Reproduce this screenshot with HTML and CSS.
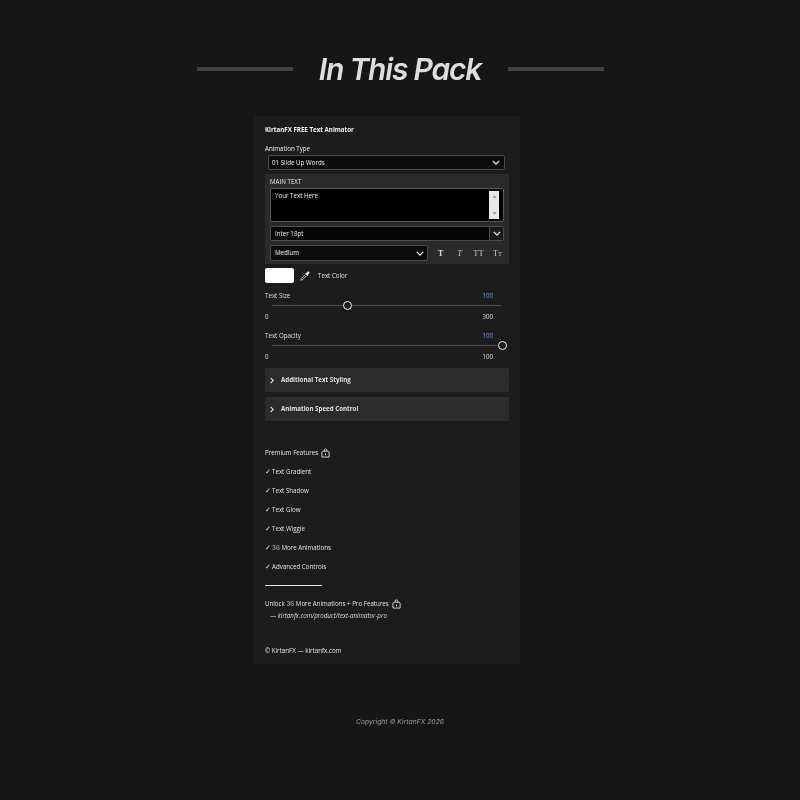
FILE: index.html
```html
<!DOCTYPE html>
<html lang="en">
<head>
<meta charset="utf-8">
<title>In This Pack</title>
<link rel="stylesheet" href="styles.css">
</head>
<body>
<main class="page">
  <header class="hero">
    <span class="hero-line"></span>
    <h1 class="hero-title">In This Pack</h1>
    <span class="hero-line"></span>
  </header>

  <section class="panel">
    <h2 class="panel-title">KirtanFX FREE Text Animator</h2>

    <div class="label label-type">Animation Type</div>
    <div class="select select-type">
      <span>01 Slide Up Words</span>
      <svg class="chev" viewBox="0 0 10 6"><path d="M1 1l4 4 4-4"/></svg>
    </div>

    <div class="group">
      <div class="group-label">MAIN TEXT</div>
      <div class="textarea">
        <span>Your Text Here</span>
        <div class="scrollbar">
          <svg viewBox="0 0 6 4"><path class="fill" d="M3 0l3 4H0z"/></svg>
          <svg viewBox="0 0 6 4"><path class="fill" d="M0 0h6L3 4z"/></svg>
        </div>
      </div>
      <div class="select font-select">
        <span class="font-name">Inter 18pt</span>
        <span class="font-btn"><svg class="chev" viewBox="0 0 10 6"><path d="M1 1l4 4 4-4"/></svg></span>
      </div>
      <div class="style-row">
        <div class="select weight-select">
          <span>Medium</span>
          <svg class="chev" viewBox="0 0 10 6"><path d="M1 1l4 4 4-4"/></svg>
        </div>
        <div class="style-btns">
          <span class="style-btn bold">T</span>
          <span class="style-btn italic">T</span>
          <span class="style-btn">TT</span>
          <span class="style-btn">T<small>T</small></span>
        </div>
      </div>
    </div>

    <div class="color-row">
      <span class="swatch"></span>
      <svg class="dropper" viewBox="0 0 12 12">
        <path class="fill" d="M7.4 2.6 9 .9c.6-.6 1.500-.6 2 0 .6.6.5 1.400 0 2L9.400 4.600l.5.6-.9.9-3-3 .9-.9z"/>
        <path class="line" d="M6.300 4.300 1.500 9.100 1 11l1.900-.5 4.800-4.800"/>
      </svg>
      <span class="color-label">Text Color</span>
    </div>

    <div class="slider-block size-block">
      <div class="slider-head"><span>Text Size</span><span class="value">100</span></div>
      <div class="track"><span class="thumb size-thumb"></span></div>
      <div class="slider-foot"><span>0</span><span>300</span></div>
    </div>

    <div class="slider-block opacity-block">
      <div class="slider-head"><span>Text Opacity</span><span class="value">100</span></div>
      <div class="track"><span class="thumb opacity-thumb"></span></div>
      <div class="slider-foot"><span>0</span><span>100</span></div>
    </div>

    <div class="collapse first">
      <svg class="caret" viewBox="0 0 6 10"><path d="M1 1l4 4-4 4"/></svg>
      <span>Additional Text Styling</span>
    </div>
    <div class="collapse">
      <svg class="caret" viewBox="0 0 6 10"><path d="M1 1l4 4-4 4"/></svg>
      <span>Animation Speed Control</span>
    </div>

    <div class="premium">
      <span>Premium Features</span>
      <svg class="lock" viewBox="0 0 10 11"><path d="M3.500 3.500V2.400C3.500 1.500 4.100 1 5 1s1.500.5 1.500 1.400v1.100M2 3.500h6l1 1V10H1V4.500zM5 6v2"/></svg>
    </div>
    <ul class="features">
      <li><span class="check">✓</span>Text Gradient</li>
      <li><span class="check">✓</span>Text Shadow</li>
      <li><span class="check">✓</span>Text Glow</li>
      <li><span class="check">✓</span>Text Wiggle</li>
      <li><span class="check">✓</span><span class="num">36</span> More Animations</li>
      <li><span class="check">✓</span>Advanced Controls</li>
    </ul>
    <hr class="rule">
    <div class="unlock">
      <span>Unlock <span class="num">36</span> More Animations + Pro Features</span>
      <svg class="lock" viewBox="0 0 10 11"><path d="M3.500 3.500V2.400C3.500 1.500 4.100 1 5 1s1.500.5 1.500 1.400v1.100M2 3.500h6l1 1V10H1V4.500zM5 6v2"/></svg>
    </div>
    <div class="link">— <em>kirtanfx.com/product/text-animator-pro</em></div>
    <div class="legal">© KirtanFX — kirtanfx.com</div>
  </section>

  <footer class="copyright">Copyright © KirtanFX 2026</footer>
</main>
</body>
</html>
```

FILE: styles.css
```css
* { box-sizing: border-box; }
html, body { margin: 0; padding: 0; }
body {
  width: 800px;
  height: 800px;
  overflow: hidden;
  background: #161616;
  color: #f0f0f0;
  font-family: "Open Sans", "Noto Sans", sans-serif;
  font-size: 6.200px;
  font-weight: 500;
  line-height: 10px;
}
.page { display: flex; flex-direction: column; align-items: center; padding-top: 50px; filter: blur(0.3px); }

.hero { display: flex; align-items: center; justify-content: center; gap: 24px; height: 38px; }
.hero-line { width: 96px; height: 4px; background: #414343; }
.hero-title {
  margin: 0;
  width: 167px;
  text-align: center;
  white-space: nowrap;
  font-family: Inter, sans-serif;
  font-size: 30px;
  line-height: 38px;
  font-weight: 600;
  font-style: italic;
  letter-spacing: -1.200px;
  color: #dedede;
}

.panel {
  width: 266px;
  height: 548px;
  margin-top: 28px;
  margin-right: 26px;
  padding: 9px 11px 0;
  background: #1c1c1c;
}
.panel-title { margin: 0; font-size: 6.200px; line-height: 10px; font-weight: 700; color: #f4f4f4; }
.label-type { margin-top: 9px; }

.select { display: flex; align-items: center; flex: none; background: #0c0c0c; border: 1px solid #4b4b4b; border-radius: 2px; }
.select-type { height: 15px; margin: 1px 4px 0 3px; padding: 0 4px 0 3px; justify-content: space-between; }
.chev { width: 8px; height: 5px; }
.chev path, .caret path { fill: none; stroke: #e8e8e8; stroke-width: 1.6; }

.group { height: 90px; margin-top: 4px; padding: 3px 5px 0; background: #2a2a2a; border-radius: 1px; }
.group-label { color: #e8e8e8; }
.textarea {
  display: flex; justify-content: space-between;
  width: 234px; height: 34px; margin-top: 1px; padding: 2px 4px 2px 4px;
  background: #000; border: 1px solid #555; border-radius: 2px;
}
.scrollbar {
  width: 10px; height: 28px; background: #e9e9e9;
  display: flex; flex-direction: column; justify-content: space-between; align-items: center; padding: 4px 0;
}
.scrollbar svg { width: 5px; height: 3px; }
.scrollbar .fill { fill: #a0a0a0; }

.font-select { width: 234px; height: 15px; margin-top: 4px; justify-content: space-between; background: #050505; }
.font-name { padding-left: 4px; }
.font-btn {
  display: flex; align-items: center; justify-content: center;
  width: 14px; height: 13px; background: #1a1a1a; border-left: 1px solid #4b4b4b;
}
.style-row { display: flex; align-items: center; margin-top: 4px; height: 16px; }
.weight-select { width: 158px; height: 16px; padding: 0 3px 0 4px; justify-content: space-between; }
.style-btns { display: flex; flex: none; margin-left: 3px; }
.style-btn {
  width: 19px; text-align: center;
  font-family: "Liberation Serif", serif; font-size: 8.500px; line-height: 12px; color: #c4c4c4;
}
.style-btn small { font-size: 6.500px; }
.style-btn.bold { font-weight: 700; color: #d8d8d8; }
.style-btn.italic { font-style: italic; }

.color-row { display: flex; align-items: center; height: 15px; margin-top: 4px; }
.swatch { width: 29px; height: 15px; background: #fff; border-radius: 2px; }
.dropper { width: 10px; height: 10px; margin-left: 6px; }
.dropper .fill { fill: #e6e6e6; }
.dropper .line { fill: none; stroke: #e6e6e6; stroke-width: 1; }
.color-label { margin-left: 8px; color: #e2e2e2; }

.slider-block { color: #dedede; }
.size-block { margin-top: 8px; }
.opacity-block { margin-top: 9px; }
.slider-head, .slider-foot { display: flex; justify-content: space-between; height: 10px; padding-right: 16px; }
.value { color: #5b9ae0; }
.track { position: relative; height: 1px; margin: 4px 8px 6px 7px; background: #4a4a4a; }
.thumb {
  position: absolute; top: -4px; width: 9px; height: 9px;
  border: 1.400px solid #efefef; border-radius: 50%; background: #1c1c1c;
}
.size-thumb { left: 71px; }
.opacity-thumb { left: 226px; }

.collapse {
  display: flex; align-items: center; height: 24px; padding-left: 5px;
  background: #2b2b2b; border-radius: 1px; font-weight: 700; color: #e0e0e0;
}
.collapse.first { margin-top: 6px; }
.collapse + .collapse { margin-top: 5px; }
.caret { width: 4px; height: 7px; margin-right: 7px; }

.premium, .unlock { display: flex; align-items: center; gap: 3px; color: #e2e2e2; }
.premium { margin-top: 27px; }
.lock { width: 9px; height: 10px; }
.lock path { fill: none; stroke: #e0e0e0; stroke-width: 1; }

.features { list-style: none; margin: 0; padding: 0; }
.features li { margin-top: 9px; color: #e2e2e2; }
.check { display: inline-block; width: 7px; font-family: "DejaVu Sans", sans-serif; font-size: 7px; }
.num { font-family: Inter, sans-serif; color: #aaa; }

.rule { width: 57px; height: 1px; margin: 13px 0 0; border: 0; background: #e0e0e0; }
.unlock { margin-top: 13px; }
.link { margin-top: 2px; padding-left: 5px; color: #dedede; }
.legal { margin-top: 25px; color: #e2e2e2; }

.copyright {
  margin-top: 53px;
  font-family: Inter, sans-serif; font-size: 6.700px; line-height: 10px;
  font-style: italic; color: #8a8a8a;
}
```
